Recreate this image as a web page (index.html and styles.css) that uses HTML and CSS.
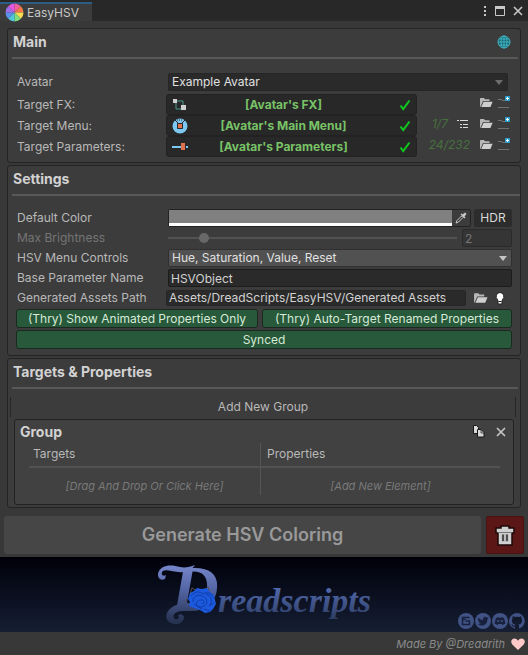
FILE: index.html
```html
<!DOCTYPE html>
<html lang="en">
<head>
<meta charset="utf-8">
<meta name="viewport" content="width=device-width, initial-scale=1">
<title>EasyHSV</title>
<link rel="stylesheet" href="styles.css">
</head>
<body>
<svg class="defs" aria-hidden="true">
  <symbol id="folder" viewBox="0 0 14 11">
    <path d="M1 10V1.5L1.5 1H5l1 1.2h4.5V4H4L1.6 9.5z" fill="#b8b8b8"/>
    <path d="M4.6 4.8H13.6L11.4 10H2.2z" fill="#cfcfcf"/>
  </symbol>
  <symbol id="folder-new" viewBox="0 0 14 13">
    <path d="M1 3.5h4M5 4.5h3M1 11.5h11" stroke="#707070" fill="none"/>
    <path d="M8 0h5v5H8z" fill="#2c9cc8"/>
    <path d="M10.5 1v3M9 2.5h3" stroke="#fff" fill="none"/>
  </symbol>
  <symbol id="check" viewBox="0 0 12 12">
    <path d="M1.5 6.5L4.2 10 10.5 1.5" stroke="#0fc81e" stroke-width="2" fill="none"/>
  </symbol>
  <symbol id="cross" viewBox="0 0 10 10">
    <path d="M1 1l8 8M9 1L1 9" stroke="#c8c8c8" stroke-width="1.6" fill="none"/>
  </symbol>
</svg>

<header class="tabbar">
  <div class="tab">
    <svg class="wheel" viewBox="-10 -10 20 20" aria-hidden="true">
      <path d="M0 0V-9.5A9.5 9.5 0 0 1 6.7 -6.7z" fill="#f0609a"/>
      <path d="M0 0L6.7 -6.7A9.5 9.5 0 0 1 9.5 0z" fill="#f27a48"/>
      <path d="M0 0H9.5A9.5 9.5 0 0 1 6.7 6.7z" fill="#f7dc52"/>
      <path d="M0 0L6.7 6.7A9.5 9.5 0 0 1 0 9.5z" fill="#7fe07a"/>
      <path d="M0 0V9.5A9.5 9.5 0 0 1 -6.7 6.7z" fill="#50c8d8"/>
      <path d="M0 0L-6.7 6.7A9.5 9.5 0 0 1 -9.5 0z" fill="#5a92ea"/>
      <path d="M0 0H-9.5A9.5 9.5 0 0 1 -6.7 -6.7z" fill="#a070ea"/>
      <path d="M0 0L-6.7 -6.7A9.5 9.5 0 0 1 0 -9.5z" fill="#e458e0"/>
    </svg>
    <span>EasyHSV</span>
  </div>
  <div class="window-tools">
    <button class="icon" aria-label="Menu"><svg width="4" height="12" viewBox="0 0 4 12"><path d="M1 1h2v2H1zM1 5h2v2H1zM1 9h2v2H1z" fill="#c8c8c8"/></svg></button>
    <button class="icon" aria-label="Maximize"><svg width="10" height="10" viewBox="0 0 10 10"><path d="M.5 .5h9v9h-9z" fill="none" stroke="#c8c8c8"/><path d="M0 0h10v3H0z" fill="#c8c8c8"/></svg></button>
    <button class="icon" aria-label="Close"><svg width="10" height="10"><use href="#cross"/></svg></button>
  </div>
</header>

<main class="content">
  <section class="panel">
    <div class="panel-head">
      <h2>Main</h2>
      <button class="icon" aria-label="Language">
        <svg width="14" height="14" viewBox="0 0 14 14"><circle cx="7" cy="7" r="6" fill="#1d5f68"/><g fill="none" stroke="#3fb4c2"><circle cx="7" cy="7" r="6"/><ellipse cx="7" cy="7" rx="3" ry="6"/><path d="M7 1v12M1 7h12M2 4h10M2 10h10"/></g></svg>
      </button>
    </div>
    <div class="main-rows">
      <div class="row avatar-row">
        <label for="avatar">Avatar</label>
        <div class="dropdown dark">
          <select id="avatar"><option>Example Avatar</option></select>
          <svg width="8" height="5" viewBox="0 0 8 5" aria-hidden="true"><path d="M0 0h8L4 5z" fill="#6c6c6c"/></svg>
        </div>
      </div>
      <div class="target-row">
        <span>Target FX:</span>
        <button class="target">
          <svg width="16" height="16" viewBox="0 0 16 16"><path d="M5 4h6v4M4 6v6h5" fill="none" stroke="#4a9a8c"/><path d="M1 2h4v4H1zM9 8h5v5H9z" fill="#d0d0d0"/></svg>
          <strong>[Avatar's FX]</strong>
          <svg width="12" height="12"><use href="#check"/></svg>
        </button>
        <div class="tools">
          <button class="icon" aria-label="Open FX"><svg width="14" height="11"><use href="#folder"/></svg></button>
          <button class="icon" aria-label="New FX"><svg width="14" height="13"><use href="#folder-new"/></svg></button>
        </div>
      </div>
      <div class="target-row">
        <span>Target Menu:</span>
        <button class="target">
          <svg width="16" height="16" viewBox="0 0 16 16"><circle cx="8" cy="8" r="7.5" fill="#7cc8f2"/><path d="M3 2l3 3M13 2l-3 3M5.5 5.5h5v5h-5z" fill="#282828" stroke="#282828"/><path d="M6 6h4v4H6z" fill="#e0714e"/><path d="M5 2h6" stroke="#282828" stroke-dasharray="1 1"/></svg>
          <strong>[Avatar's Main Menu]</strong>
          <svg width="12" height="12"><use href="#check"/></svg>
        </button>
        <div class="tools">
          <em>1/7</em>
          <button class="icon list" aria-label="Menu entries"><svg width="12" height="10" viewBox="0 0 12 10"><path d="M0 1.500h2M3 1.500h8M3 5.500h2M6 5.500h5M3 8.500h2M6 8.500h5" stroke="#dcdcdc" fill="none"/></svg></button>
          <button class="icon" aria-label="Open menu"><svg width="14" height="11"><use href="#folder"/></svg></button>
          <button class="icon" aria-label="New menu"><svg width="14" height="13"><use href="#folder-new"/></svg></button>
        </div>
      </div>
      <div class="target-row">
        <span>Target Parameters:</span>
        <button class="target">
          <svg width="16" height="16" viewBox="0 0 16 16"><path d="M0 7h9v2H0zM14 7h2v2h-2z" fill="#7cc8f2"/><path d="M9 4h4v7H9z" fill="#e0714e"/></svg>
          <strong>[Avatar's Parameters]</strong>
          <svg width="12" height="12"><use href="#check"/></svg>
        </button>
        <div class="tools">
          <em>24/232</em>
          <button class="icon" aria-label="Open parameters"><svg width="14" height="11"><use href="#folder"/></svg></button>
          <button class="icon" aria-label="New parameters"><svg width="14" height="13"><use href="#folder-new"/></svg></button>
        </div>
      </div>
    </div>
  </section>

  <section class="panel">
    <div class="panel-head wide"><h2>Settings</h2></div>
    <div class="settings-rows">
      <div class="row">
        <label for="color">Default Color</label>
        <div class="color-line">
          <div class="color-field">
            <input type="color" id="color" value="#808080">
            <button class="icon" aria-label="Pick color"><svg width="12" height="12" viewBox="0 0 12 12"><path d="M1 11l1-2.500 4.500-4.500 1.500 1.500L3.500 10z" fill="none" stroke="#c8c8c8"/><path d="M5.500 2.500l4 4 1-1-1-1 2-2.500L10 .5 7.500 2.500l-1-1z" fill="#c8c8c8"/></svg></button>
          </div>
          <button class="hdr">HDR</button>
        </div>
      </div>
      <div class="row disabled">
        <label for="brightness">Max Brightness</label>
        <div class="slider-line">
          <input type="range" id="brightness" min="1" max="10" value="2" disabled>
          <input type="text" class="field" aria-label="Max Brightness value" value="2" disabled>
        </div>
      </div>
      <div class="row">
        <label for="controls">HSV Menu Controls</label>
        <div class="dropdown">
          <select id="controls"><option>Hue, Saturation, Value, Reset</option></select>
          <svg width="8" height="5" viewBox="0 0 8 5" aria-hidden="true"><path d="M0 0h8L4 5z" fill="#c4c4c4"/></svg>
        </div>
      </div>
      <div class="row">
        <label for="base">Base Parameter Name</label>
        <input type="text" class="field" id="base" value="HSVObject">
      </div>
      <div class="row path-row">
        <label for="path">Generated Assets Path</label>
        <div class="path-line">
          <input type="text" class="field" id="path" value="Assets/DreadScripts/EasyHSV/Generated Assets">
          <button class="icon" aria-label="Browse"><svg width="15" height="12" viewBox="0 0 14 11"><use href="#folder"/></svg></button>
          <button class="icon" aria-label="Hint"><svg width="10" height="13" viewBox="0 0 10 13"><path d="M5 .5a4 4 0 0 1 2.500 7L7 9v3H3V9l-.5-1.500A4 4 0 0 1 5 .5z" fill="#fff" stroke="#222"/><path d="M3.500 9.500h3" stroke="#222"/></svg></button>
        </div>
      </div>
    </div>
    <div class="toggles">
      <button>(Thry) Show Animated Properties Only</button>
      <button>(Thry) Auto-Target Renamed Properties</button>
      <button class="full">Synced</button>
    </div>
  </section>

  <section class="panel">
    <div class="panel-head"><h2>Targets &amp; Properties</h2></div>
    <button class="add-group">Add New Group</button>
    <div class="group">
      <div class="group-head">
        <h3>Group</h3>
        <button class="icon" aria-label="Duplicate group"><svg width="12" height="13" viewBox="0 0 12 13"><path d="M.5 .5h3l2 2v6h-5z" fill="#d8d8d8" stroke="#191919"/><path d="M4.500 4.500h3.500l3 3v4.500h-6.500z" fill="#d8d8d8" stroke="#191919"/><path d="M8 5v3h3" fill="none" stroke="#191919" stroke-width=".7"/></svg></button>
        <button class="icon" aria-label="Remove group"><svg width="10" height="10"><use href="#cross"/></svg></button>
      </div>
      <div class="columns">
        <div class="column"><h4>Targets</h4><button>[Drag And Drop Or Click Here]</button></div>
        <div class="column"><h4>Properties</h4><button>[Add New Element]</button></div>
      </div>
    </div>
  </section>
</main>

<div class="actions">
  <button class="generate" disabled>Generate HSV Coloring</button>
  <button class="delete" aria-label="Delete">
    <svg width="20" height="21" viewBox="0 0 20 21"><path d="M6 1h8v2h5v5h-2v12H3V8H1V3h5z" fill="#d0d0d0" stroke="#1c0808" stroke-width="1.500"/><path d="M3 7.500h14" stroke="#777"/><path d="M6.500 9v8h7V9z" fill="#bbb"/><path d="M8 9.500v6.500M12 9.500v6.500" stroke="#2a2a2a" stroke-width="1.500"/></svg>
  </button>
</div>

<div class="banner">
  <svg class="logo" viewBox="0 0 230 70" role="img" aria-label="Dreadscripts">
    <defs>
      <linearGradient id="ink" gradientUnits="userSpaceOnUse" x1="0" y1="4" x2="0" y2="62">
        <stop offset="0" stop-color="#7888cc"/><stop offset=".45" stop-color="#5364a4"/><stop offset="1" stop-color="#26324f"/>
      </linearGradient>
      <linearGradient id="word" gradientUnits="userSpaceOnUse" x1="0" y1="28" x2="0" y2="60">
        <stop offset="0" stop-color="#5269ac"/><stop offset="1" stop-color="#2c3c62"/>
      </linearGradient>
    </defs>
    <text class="initial" x="22" y="51" fill="url(#ink)">D</text>
    <path d="M16 19c-5 3-9-3-6-8 4-7 14-6 21-4 5 1 10 0 15-2-4 6-10 8-17 7-7-1-12-3-15-1-3 3 0 6 3 4z" fill="url(#ink)"/>
    <path d="M57 45c-8-3-24-3-32 1-8 4-10 12-5 16 6 4 14 2 15-4 0-4-5-5-6-2 3 2-2 5-4 2-2-4 3-7 9-7 11 0 18 1 23-6z" fill="url(#ink)"/>
    <path d="M41 34l2-6 5 3M54 31l5-4 2 6M38 39l-2 3" fill="none" stroke="#554c50"/>
    <path d="M41 33l4-2 3-3 5 1 5-1 3 4 4 3 1 5 1 4-3 5-3 3-5 1-5-3-6-2-5-2 1-4-2-3z" fill="#1b59df"/>
    <path d="M42 36c4-5 9-5 12-2 5-3 9 0 11 4M44 42c-1-6 6-9 11-5 5 3 3 10-3 10s-6-6-1-7 5 4 2 4M57 34c6 2 7 8 3 12M60 46l5-3M55 49l6 2M45 44l8 5" fill="none" stroke="#0f3598" stroke-width=".8"/>
    <text class="word" x="69" y="52" fill="url(#word)">readscripts</text>
  </svg>
  <nav class="social">
    <a href="#" aria-label="Website"><svg viewBox="0 0 16 16"><circle cx="8" cy="8" r="8" fill="#415285"/><path d="M11.500 4.500h-7v7h7V8H7.500M4.500 6.500h3" fill="none" stroke="#17213d" stroke-width="1.500"/></svg></a>
    <a href="#" aria-label="Twitter"><svg viewBox="0 0 16 16"><circle cx="8" cy="8" r="8" fill="#415285"/><path d="M3 4.500c1.500 1.600 3 2.300 5 2.400C7.700 4 10.500 3 12 4.700l1.500-.5-.8 1.500.8-.1-1.200 1.200C12.300 12 7 14 2.800 11.500c1.500 0 2.300-.3 3-.9-1.100-.2-1.700-.8-2-1.600h1C3.500 8.400 3 7.500 3 6.600l1 .2C2.900 6 2.600 5.300 3 4.500z" fill="#17213d"/></svg></a>
    <a href="#" aria-label="Discord"><svg viewBox="0 0 16 16"><circle cx="8" cy="8" r="8" fill="#415285"/><path d="M4 5l2.500-1 .5.700h2l.5-.7L12 5l1.500 5.500L10.500 12l-.8-1H6.300l-.8 1-3-1.500z" fill="#17213d"/><circle cx="6.200" cy="8" r="1.100" fill="#415285"/><circle cx="9.800" cy="8" r="1.100" fill="#415285"/></svg></a>
    <a href="#" aria-label="GitHub"><svg viewBox="0 0 16 16"><path d="M8 0a8 8 0 0 0-2.500 15.600c.4.100.5-.2.500-.4v-1.500c-2.200.5-2.700-1-2.700-1-.4-.9-.9-1.200-.9-1.200-.7-.5.1-.5.1-.5.800.1 1.200.8 1.200.8.7 1.300 1.900.9 2.300.7.100-.5.300-.9.500-1.100-1.800-.2-3.600-.9-3.600-4 0-.9.300-1.600.8-2.100-.1-.2-.4-1 .1-2.100 0 0 .7-.2 2.200.8a7.500 7.500 0 0 1 4 0c1.500-1 2.200-.8 2.200-.8.4 1.100.2 1.900.1 2.100.5.600.8 1.300.8 2.100 0 3.100-1.900 3.700-3.700 3.900.3.300.6.800.6 1.500v2.300c0 .2.100.5.500.4A8 8 0 0 0 8 0z" fill="#415285"/></svg></a>
  </nav>
</div>

<footer class="credit">
  <em>Made By @Dreadrith</em>
  <svg width="14" height="12" viewBox="0 0 14 12" aria-hidden="true"><path d="M7 12L1.300 6.500C-1 4 .6.500 3.600.5 5.200.5 6.500 1.500 7 2.800 7.500 1.500 8.800.5 10.400.5c3 0 4.600 3.500 2.300 6z" fill="#ffc9c9"/></svg>
</footer>
</body>
</html>
```
FILE: styles.css
```css
* {
  box-sizing: border-box;
}

body {
  margin: 0;
  background: #383838;
  color: #b8b8b8;
  font: 12px/16px Inter, "Liberation Sans", sans-serif;
}

h2, h3, h4 {
  margin: 0;
  color: #d2d2d2;
  font-size: 14px;
  font-weight: 700;
}

button, input, select {
  margin: 0;
  padding: 0;
  border: 0;
  border-radius: 2px;
  background: none;
  color: inherit;
  font: inherit;
}

svg {
  display: block;
  flex: none;
}

.defs {
  position: absolute;
  width: 0;
  height: 0;
}

.icon {
  display: flex;
  align-items: center;
  justify-content: center;
}

/* Window tab bar */
.tabbar {
  display: flex;
  justify-content: space-between;
  height: 21px;
  background: #282828;
}

.tab {
  display: flex;
  align-items: center;
  gap: 3px;
  margin-top: 2px;
  padding: 0 13px 0 5px;
  border-top: 2px solid #2c5d87;
  background: #3c3c3c;
  color: #c8c8c8;
}

.wheel {
  width: 19px;
  height: 19px;
}

.window-tools {
  display: flex;
  align-items: center;
  gap: 8px;
  padding-right: 5px;
}

/* Panels */
.content {
  display: flex;
  flex-direction: column;
  gap: 2px;
  padding: 7px 7px 8px;
}

.panel {
  border: 1px solid #242424;
  border-radius: 3px;
  background: #3c3c3c;
}

.panel-head {
  display: flex;
  align-items: center;
  justify-content: space-between;
  height: 30px;
  margin: 0 2px 0 4px;
  padding: 0 7px 2px 1px;
  border-bottom: 2px solid #585858;
}

.panel-head.wide {
  margin-right: 0;
}

.row {
  display: grid;
  grid-template-columns: 151px minmax(0, 1fr);
  align-items: center;
  height: 18px;
}

.field {
  width: 100%;
  height: 18px;
  padding: 0 2px;
  border: 1px solid #1c1c1c;
  background: #2a2a2a;
  color: #d2d2d2;
}

.dropdown {
  display: grid;
  align-items: center;
  height: 18px;
}

.dropdown select,
.dropdown svg {
  grid-area: 1 / 1;
}

.dropdown select {
  appearance: none;
  width: 100%;
  height: 18px;
  padding: 0 3px;
  border: 1px solid #303030;
  background: #515151;
  color: #e0e0e0;
}

.dropdown.dark select {
  border-color: #262626;
  background: #2a2a2a;
}

.dropdown svg {
  justify-self: end;
  margin-right: 5px;
  pointer-events: none;
}

/* Main */
.main-rows {
  padding: 14px 9px 5px;
}

.avatar-row {
  margin: 0 3px 3px 0;
}

.target-row {
  display: grid;
  grid-template-columns: 149px minmax(0, 8fr) minmax(90px, 3fr);
  align-items: center;
  height: 21px;
}

.target {
  display: flex;
  align-items: center;
  height: 21px;
  padding: 0 5px;
  border: 1px solid #222;
  border-radius: 3px;
  background: #282828;
}

.target strong {
  flex: 1;
  padding-right: 20px;
  color: #79c267;
  font-weight: 700;
}

.tools {
  display: flex;
  align-items: center;
  justify-content: flex-end;
  gap: 4px;
  padding-bottom: 4px;
}

.tools em {
  margin-right: 5px;
  color: #47703e;
}

.tools .list {
  margin-right: 6px;
}

/* Settings */
.settings-rows {
  display: flex;
  flex-direction: column;
  gap: 2px;
  padding: 13px 8px 2px 9px;
}

.color-line,
.slider-line,
.path-line {
  display: flex;
  align-items: center;
  gap: 3px;
}

.color-field {
  display: flex;
  flex: 1;
  height: 18px;
  border: 1px solid #222;
  border-radius: 2px;
}

.color-field input {
  flex: 1;
  height: 16px;
  border-bottom: 3px solid #fff;
  border-radius: 0;
}

.color-field input::-webkit-color-swatch-wrapper {
  padding: 0;
}

.color-field input::-webkit-color-swatch {
  border: 0;
  border-radius: 0;
}

.color-field .icon {
  width: 18px;
}

.hdr {
  width: 38px;
  height: 18px;
  background: #2c2c2c;
  color: #d8d8d8;
}

.disabled {
  color: #757575;
}

.slider-line {
  gap: 5px;
}

.slider-line .field {
  width: 50px;
  border-color: #2a2a2a;
  background: #353535;
  color: #757575;
}

.slider-line input[type="range"] {
  appearance: none;
  flex: 1;
  min-width: 0;
  height: 10px;
}

.slider-line input::-webkit-slider-runnable-track {
  height: 2px;
  background: #525252;
}

.slider-line input::-webkit-slider-thumb {
  appearance: none;
  width: 10px;
  height: 10px;
  margin-top: -4px;
  border-radius: 50%;
  background: #686868;
}

.path-row {
  grid-template-columns: 149px minmax(0, 1fr);
}

.path-line {
  gap: 7px;
  padding-right: 7px;
}

.path-line .field {
  flex: 1;
  height: 16px;
  border-color: #262626;
}

.toggles {
  display: grid;
  grid-template-columns: 242fr 250fr;
  gap: 2px 4px;
  padding: 0 8px 6px;
}

.toggles button {
  height: 19px;
  border: 1px solid #1b2a20;
  border-radius: 3px;
  background: #28593a;
  color: #d6ead8;
}

.toggles .full {
  grid-column: 1 / -1;
}

/* Targets & Properties */
.add-group {
  display: block;
  width: calc(100% - 6px);
  height: 20px;
  margin: 8px 4px 2px 2px;
  border: solid #262626;
  border-width: 0 1px;
  border-radius: 0;
}

.group {
  margin: 0 6px 2px;
  border: 1px solid #222;
  border-radius: 3px;
  background: #414141;
}

.group-head {
  display: flex;
  align-items: center;
  gap: 11px;
  height: 23px;
  padding: 0 7px 0 5px;
}

.group-head h3 {
  flex: 1;
}

.columns {
  display: grid;
  grid-template-columns: 231fr 240fr;
  margin: 0 13px 9px 14px;
}

.column + .column {
  border-left: 1px solid #565656;
}

.column h4 {
  padding: 3px 4px 4px;
  border-bottom: 2px solid #525252;
  color: #b8b8b8;
  font-size: 12px;
  font-weight: 400;
}

.column + .column h4 {
  padding-left: 6px;
}

.column button {
  width: 100%;
  height: 27px;
  padding-top: 9px;
  color: #797979;
  font-size: 11px;
  font-style: italic;
}

/* Actions */
.actions {
  display: flex;
  gap: 5px;
  padding: 0 4px 3px;
}

.generate {
  flex: 1;
  height: 38px;
  border-radius: 3px;
  background: #464646;
  color: #999;
  font-size: 18px;
  font-weight: 600;
}

.delete {
  display: grid;
  place-items: center;
  width: 38px;
  border: 1px solid #4a1212;
  background: #5b1616;
}

/* Banner */
.banner {
  position: relative;
  display: flex;
  justify-content: center;
  height: 75px;
  padding-top: 3px;
  background: linear-gradient(#00000a, #151e33);
}

.logo {
  width: 230px;
  height: 70px;
  overflow: visible;
}

.initial,
.word {
  font-family: "Liberation Serif", serif;
  font-style: italic;
  font-weight: 700;
}

.initial {
  font-size: 66px;
}

.word {
  font-size: 34px;
}

.social {
  position: absolute;
  right: 3px;
  bottom: 3px;
  display: flex;
  gap: 1px;
}

.social svg {
  width: 16px;
  height: 16px;
}

.credit {
  display: flex;
  align-items: center;
  justify-content: flex-end;
  gap: 6px;
  height: 23px;
  padding-right: 3px;
  color: #8a8a8a;
  font-size: 11px;
}
```
